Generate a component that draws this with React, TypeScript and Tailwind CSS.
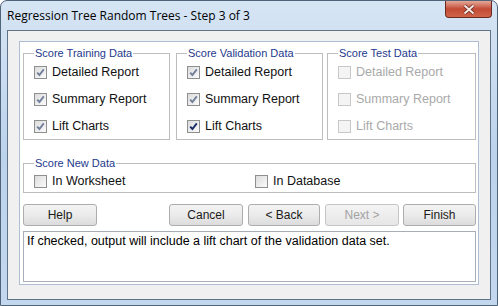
import React from 'react';

type BoxProps = { checked?: boolean; strong?: boolean; disabled?: boolean };

function Box({ checked, strong, disabled }: BoxProps) {
  return (
    <span
      className={`flex h-[13px] w-[13px] shrink-0 items-center justify-center border ${
        disabled
          ? 'border-[#c8c8c8] bg-[#f4f4f4]'
          : 'border-[#8e8f8f] bg-gradient-to-br from-[#dcdcdc] to-[#fbfbfb]'
      }`}
    >
      {checked && (
        <svg width="9" height="9" viewBox="0 0 9 9">
          <path
            d="M1.2 4.6 L3.4 7 L7.8 1.4"
            fill="none"
            stroke={strong ? '#1b2d66' : '#72809c'}
            strokeWidth="1.9"
          />
        </svg>
      )}
    </span>
  );
}

function Check({ label, checked, strong, disabled, className = '' }: BoxProps & { label: string; className?: string }) {
  return (
    <div className={`flex items-center gap-[5px] ${className}`}>
      <Box checked={checked} strong={strong} disabled={disabled} />
      <span className={`text-[12.5px] ${disabled ? 'text-[#a9a9a9]' : 'text-[#111]'}`}>{label}</span>
    </div>
  );
}

function Group({ title, width, children }: { title: string; width: string; children: React.ReactNode }) {
  return (
    <fieldset className={`${width} border border-[#bdbdbd] pl-[10px]`}>
      <legend className="px-[1px] text-[11px] leading-[11px] text-[#1e3a8c]">{title}</legend>
      {children}
    </fieldset>
  );
}

function Btn({ label, disabled, className = '' }: { label: string; disabled?: boolean; className?: string }) {
  return (
    <button
      className={`h-[22px] rounded-[3px] border text-[12px] ${
        disabled
          ? 'border-[#c5c5c5] bg-gradient-to-b from-[#f4f4f4] to-[#e6e6e6] text-[#a3a3a3]'
          : 'border-[#adadad] bg-gradient-to-b from-[#f3f3f3] via-[#ebebeb] to-[#dcdcdc] text-[#1a1a1a]'
      } ${className}`}
    >
      {label}
    </button>
  );
}

export default function App() {
  const reports = ['Detailed Report', 'Summary Report', 'Lift Charts'];

  return (
    <div
      className="flex h-[306px] w-[498px] flex-col rounded-t-[7px] border border-[#4f6379] bg-gradient-to-b from-[#d6e5f4] via-[#bcd3ec] to-[#c3d8ef] text-[13px]"
      style={{ fontFamily: '"Liberation Sans", Arial, sans-serif' }}
    >
      <div className="flex h-[29px] shrink-0 items-start">
        <div
          className="pl-[6px] pt-[6px] text-[12px] text-black"
          style={{ fontFamily: '"Open Sans", "Noto Sans", sans-serif' }}
        >
          Regression Tree Random Trees - Step 3 of 3
        </div>
        <div className="ml-auto mr-[5px] flex h-[17px] w-[47px] items-center justify-center rounded-b-[4px] border border-t-0 border-[#6b2a20] bg-gradient-to-b from-[#e3a898] via-[#c24a36] to-[#d0644a]">
          <svg width="14" height="11" viewBox="0 0 14 11">
            <path d="M2.5 1.5 L11.5 9.5 M11.5 1.5 L2.5 9.5" stroke="#6a2a20" strokeWidth="3.6" />
            <path d="M2.5 1.5 L11.5 9.5 M11.5 1.5 L2.5 9.5" stroke="#f4e9e6" strokeWidth="2" />
          </svg>
        </div>
      </div>

      <div className="mx-[6px] mb-[5px] flex flex-1 flex-col border border-[#5f7288] bg-[#f0f0f0] pb-[14px] pl-[11px] pr-[11px] pt-[10px]">
        <div className="flex flex-1 flex-col border border-[#aebfd4] bg-white pl-[3px] pr-[2px] pt-[6px]">
          <div className="flex">
            <Group title="Score Training Data" width="w-[147px]">
              {reports.map((r, i) => (
                <Check key={r} label={r} checked className={i === 2 ? 'h-[26px]' : 'h-[27px]'} />
              ))}
            </Group>
            <div className="ml-[6px]">
              <Group title="Score Validation Data" width="w-[147px]">
                {reports.map((r, i) => (
                  <Check key={r} label={r} checked strong={i === 2} className={i === 2 ? 'h-[26px]' : 'h-[27px]'} />
                ))}
              </Group>
            </div>
            <div className="ml-[4px]">
              <Group title="Score Test Data" width="w-[149px]">
                {reports.map((r, i) => (
                  <Check key={r} label={r} disabled className={i === 2 ? 'h-[26px]' : 'h-[27px]'} />
                ))}
              </Group>
            </div>
          </div>

          <div className="mt-[18px] w-[453px]">
            <Group title="Score New Data" width="w-[453px]">
              <div className="flex h-[23px] items-center pt-[1px]">
                <Check label="In Worksheet" className="w-[221px]" />
                <Check label="In Database" />
              </div>
            </Group>
          </div>

          <div className="mt-[11px] flex w-[453px]">
            <Btn label="Help" className="w-[74px]" />
            <Btn label="Cancel" className="ml-auto w-[74px]" />
            <Btn label="< Back" className="ml-[5px] w-[72px]" />
            <Btn label="Next >" disabled className="ml-[5px] w-[74px]" />
            <Btn label="Finish" className="ml-[4px] w-[73px]" />
          </div>

          <div className="mt-[5px] h-[51px] w-[453px] border border-[#a9aeb6] px-[3px] pt-[1px] text-[12.5px] leading-[16px] text-black">
            If checked, output will include a lift chart of the validation data set.
          </div>
        </div>
      </div>
    </div>
  );
}
